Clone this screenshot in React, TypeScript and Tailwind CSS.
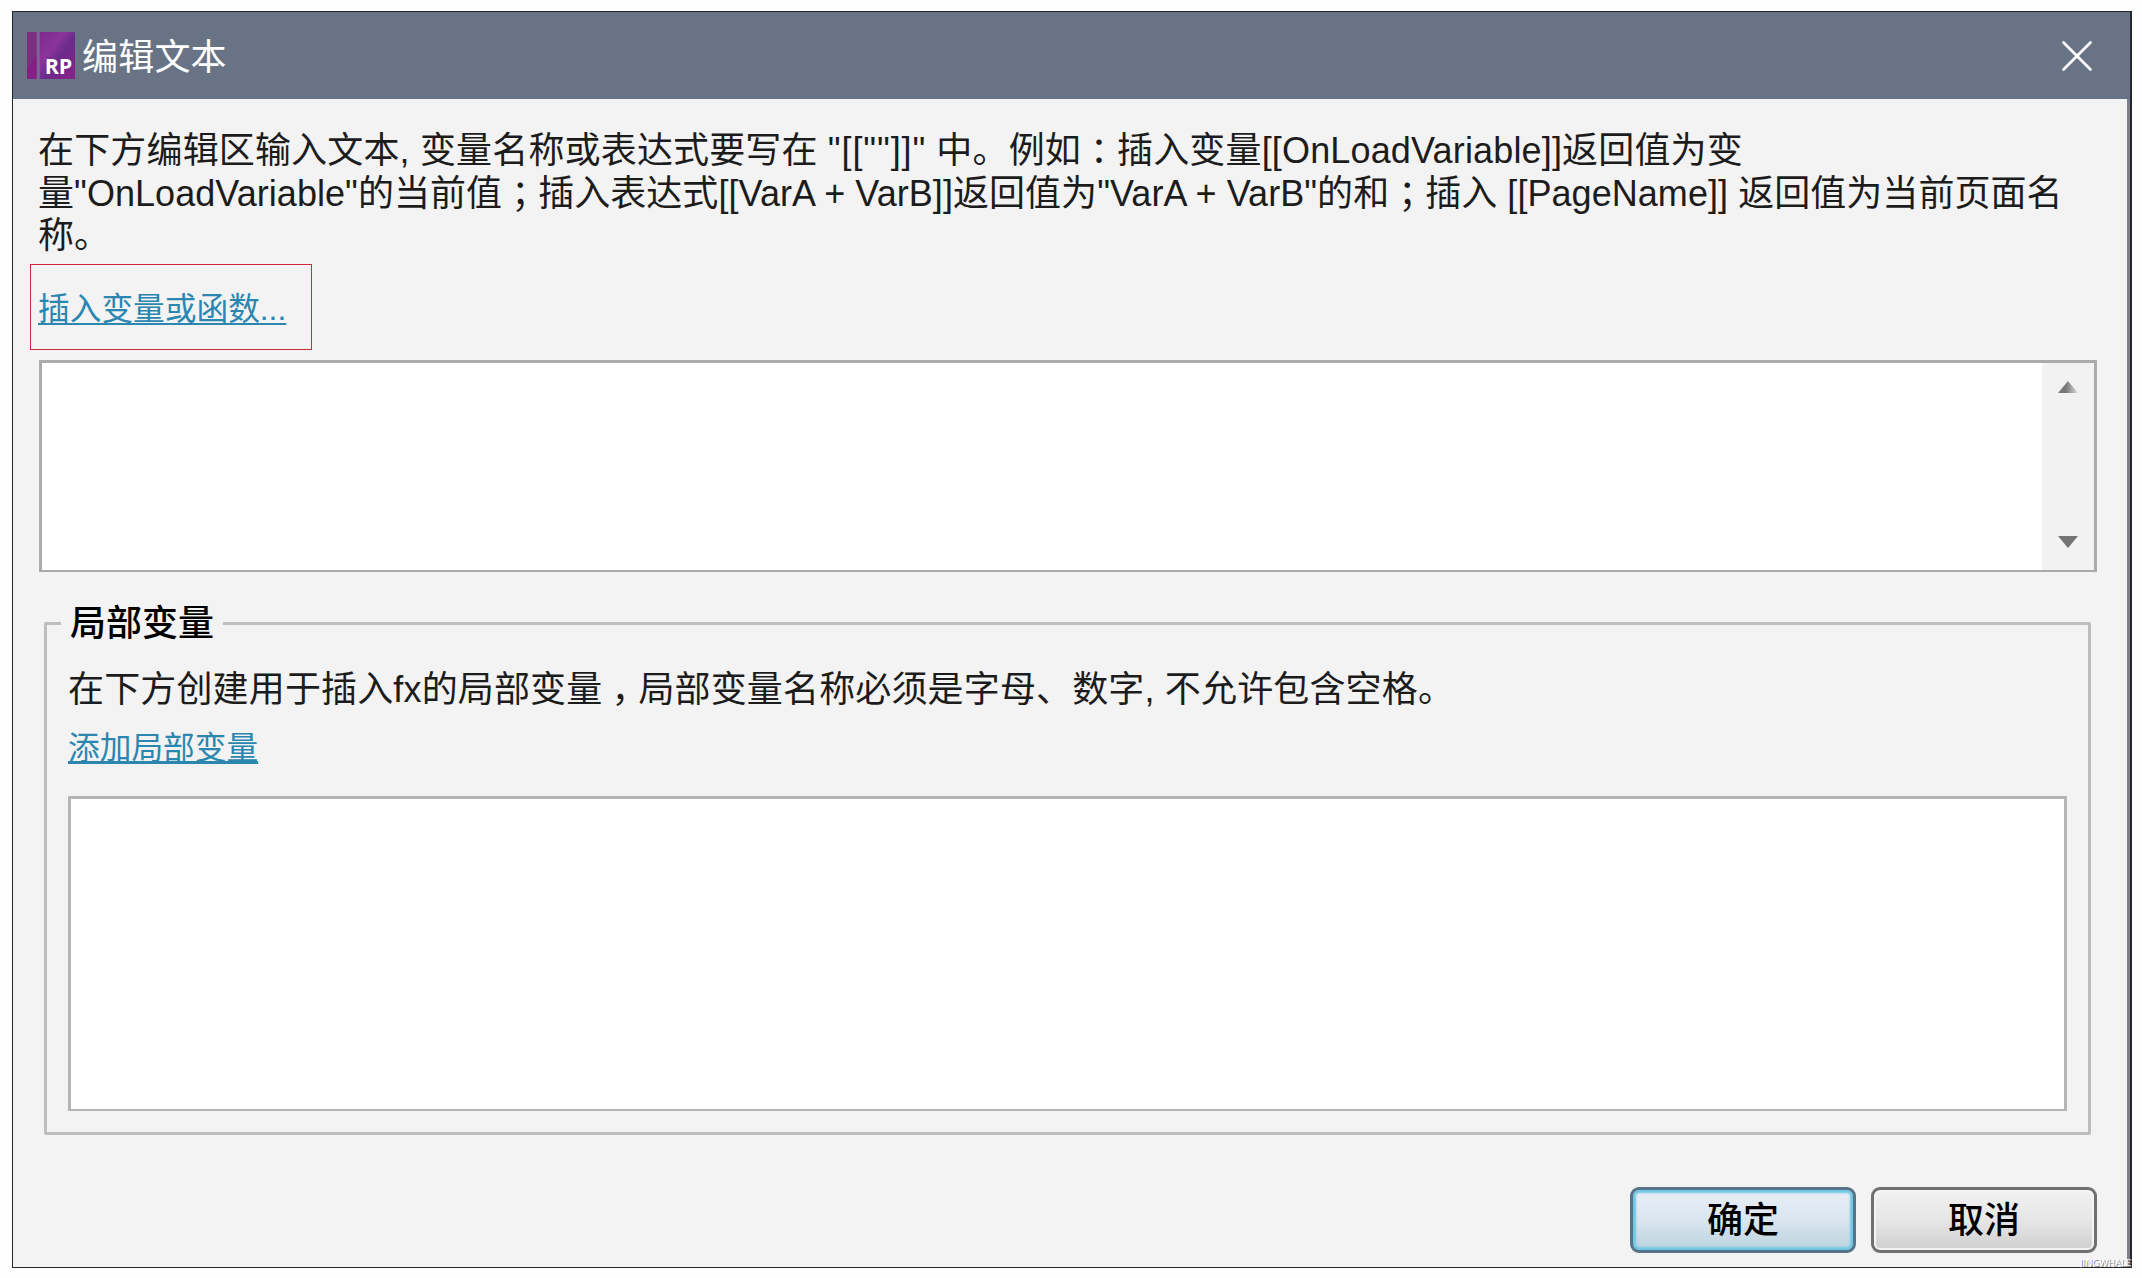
import { X } from "lucide-react";

interface DialogButtonProps
  extends React.ButtonHTMLAttributes<HTMLButtonElement> {
  label: string;
  primary?: boolean;
}

// full-width punctuation that sits in the middle of its cell
function Mark({ children }: { children: string }) {
  return (
    <span className="px-[9px] tracking-normal [font-feature-settings:'halt']">
      {children}
    </span>
  );
}

function AppLogo() {
  return (
    <svg width="48" height="47" viewBox="0 0 49 48" className="shrink-0">
      <defs>
        <linearGradient id="logo" x1="0" y1="0" x2="1" y2="1">
          <stop offset="0" stopColor="#7f2a8c" />
          <stop offset="0.35" stopColor="#8a3499" />
          <stop offset="0.55" stopColor="#6a2a8c" />
          <stop offset="1" stopColor="#8a2186" />
        </linearGradient>
      </defs>
      <rect width="10" height="48" fill="#7c2f80" />
      <path d="M0 48V38L10 22V48Z" fill="#841f84" />
      <rect x="10" width="3" height="48" fill="#7d6592" />
      <rect x="13" width="36" height="48" fill="url(#logo)" />
      <text
        x="18"
        y="43"
        fill="#fff"
        fontSize="22"
        fontWeight="700"
        fontFamily="Open Sans, sans-serif"
      >
        RP
      </text>
    </svg>
  );
}

function DialogButton({ label, primary, ...props }: DialogButtonProps) {
  return (
    <button
      className={
        primary
          ? "w-[226px] h-[66px] pt-[3px] rounded-[9px] border-3 border-[#557487] bg-linear-to-b from-[#e9eff6] from-0% via-[#d9e6ef] via-50% to-[#bcd3df] to-100% shadow-[inset_0_0_2px_3px_#6cc8e4] text-[36px] font-medium leading-none text-black"
          : "w-[226px] h-[66px] pt-[3px] rounded-[9px] border-3 border-[#707070] bg-linear-to-b from-[#f2f2f2] from-0% via-[#e6e6e6] via-50% to-[#cfcfcf] to-100% shadow-[inset_0_0_1px_2px_#f6f6f6] text-[36px] font-medium leading-none text-black"
      }
      {...props}
    >
      {label}
    </button>
  );
}

function LocalVariables() {
  return (
    <div className="ml-[31px] mr-[36px] mt-[26px]">
      <fieldset className="h-[537px] border-3 border-[#bdbdbd] rounded-[2px] px-[21px]">
        <legend className="-ml-[7px] h-[52px] px-[9px] text-[36px] leading-[51px] font-medium text-black">
          局部变量
        </legend>
        <p className="mt-[15px] text-[36px] leading-[50px] tracking-[0.15px] whitespace-nowrap">
          在下方创建用于插入fx的局部变量<Mark>，</Mark>
          局部变量名称必须是字母、数字, 不允许包含空格。
        </p>
        <a className="mt-[10px] block w-fit text-[31.7px] leading-[46px] text-[#2b86b0] underline decoration-3 underline-offset-[2px]">
          添加局部变量
        </a>
        <div className="mt-[25px] h-[315px] bg-white border-3 border-b-2 border-[#b5b5b5]" />
      </fieldset>
    </div>
  );
}

export default function App() {
  return (
    <div className="relative w-[2142px] h-[1278px] bg-[#fefefe] pl-[12px] pt-[11px] overflow-hidden font-['Liberation_Sans','Noto_Sans_CJK_SC',sans-serif] text-[#1c1c1c]">
      <div className="w-[2120px] h-[1257px] flex flex-col bg-[#f3f3f3] border border-r-2 border-[#26262c]">
        <header className="h-[87px] shrink-0 flex items-center bg-[#687486] pl-[14px] pr-[26px] text-white">
          <AppLogo />
          <h1 className="ml-[7px] mt-[4px] text-[36px] leading-[50px] tracking-[0.2px]">
            编辑文本
          </h1>
          <X className="ml-auto" size={54} strokeWidth={1.2} />
        </header>

        <main className="flex-1 border-r-3 border-[#7c7e8a]">
          <div className="ml-[25px] mt-[31px] text-[36px] leading-[42.5px] tracking-[0.05px] whitespace-nowrap">
            <p className="h-[42.5px] tracking-[0.16px]">
              在下方编辑区输入文本, 变量名称或表达式要写在{" "}
              <span className="tracking-[0.9px]">"[[""]]"</span> 中。例如
              <Mark>：</Mark>插入变量[[OnLoadVariable]]返回值为变
            </p>
            <p className="h-[42.5px]">
              量"OnLoadVariable"的当前值<Mark>；</Mark>插入表达式[[VarA +
              VarB]]返回值为"VarA + VarB"的和<Mark>；</Mark>插入 [[PageName]]
              返回值为当前页面名
            </p>
            <p className="h-[42.5px]">称。</p>
          </div>

          <div className="ml-[17px] mt-[6px] w-[282px] h-[86px] border border-[#d0263e] flex items-center pl-[7px] pt-[4px]">
            <a className="text-[31.7px] leading-[46px] text-[#2b86b0] underline decoration-2 underline-offset-[3px]">
              插入变量或函数...
            </a>
          </div>

          <div className="ml-[26px] mr-[30px] mt-[10px] h-[212px] flex justify-end bg-white border-3 border-b-2 border-[#ababab]">
            <div className="w-[52px] bg-[#f2f2f2] flex flex-col items-center justify-between pt-[18px] pb-[22px]">
              <svg width="20" height="12" viewBox="0 0 20 12">
                <defs>
                  <linearGradient id="up">
                    <stop offset="0.4" stopColor="#777" />
                    <stop offset="1" stopColor="#ddd" />
                  </linearGradient>
                </defs>
                <path d="M0 12L10 0L20 12Z" fill="url(#up)" />
              </svg>
              <svg width="20" height="12" viewBox="0 0 20 12">
                <path d="M0 0H20L10 12Z" fill="#747474" />
              </svg>
            </div>
          </div>

          <LocalVariables />

          <div className="mt-[52px] mr-[30px] flex justify-end gap-[15px]">
            <DialogButton label="确定" primary />
            <DialogButton label="取消" />
          </div>
        </main>
      </div>
      <span className="absolute left-[2080px] top-[1256px] font-['Open_Sans',sans-serif] text-[9.5px] leading-[14px] text-white [text-shadow:1px_1px_0_#777]">
        JINGWHALE
      </span>
    </div>
  );
}
